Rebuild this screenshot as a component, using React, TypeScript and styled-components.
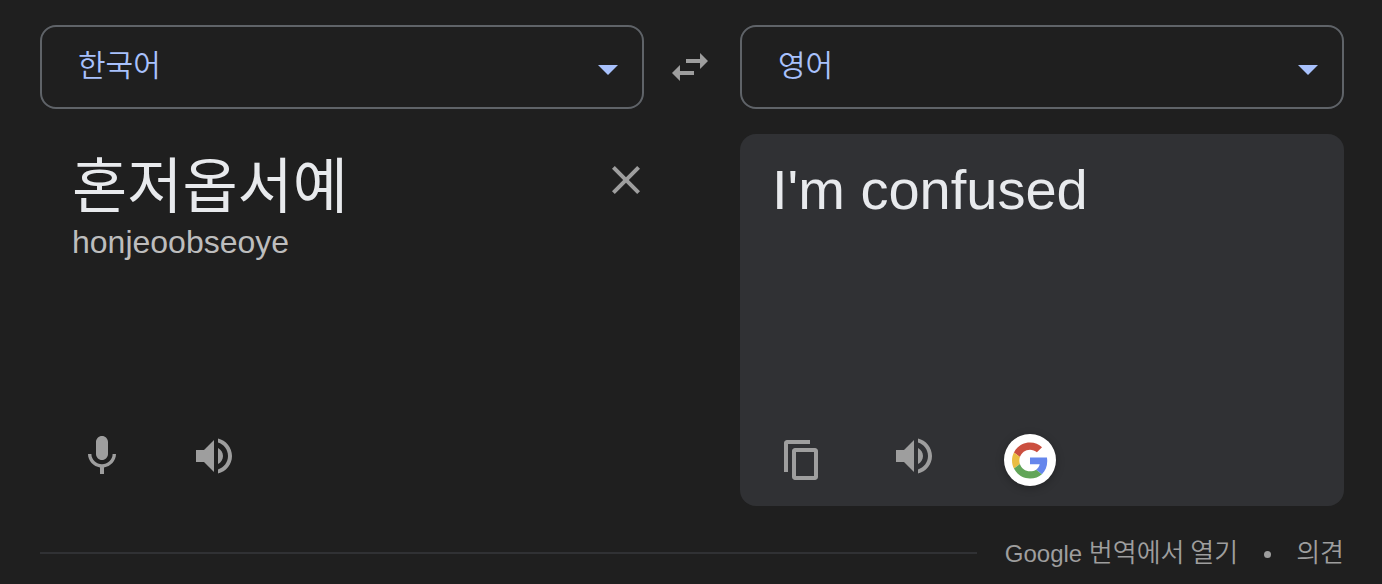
import React, { useState } from "react";
import styled, { createGlobalStyle } from "styled-components";

const GlobalStyle = createGlobalStyle`
  *, *::before, *::after { box-sizing: border-box; }
  body {
    margin: 0;
    background: #1f1f1f;
    color: #e8eaed;
    font-family: "Liberation Sans", "Noto Sans CJK KR", sans-serif;
  }
`;

const Page = styled.main`
  padding: 25px 38px 16px 40px;
`;

const LanguageBar = styled.div`
  display: grid;
  grid-template-columns: 1fr 96px 1fr;
  align-items: center;
`;

const SelectBox = styled.div`
  position: relative;
  height: 84px;
`;

const LanguageSelect = styled.select`
  appearance: none;
  width: 100%;
  height: 100%;
  padding: 0 64px 8px 36px;
  border: 2px solid #5f6368;
  border-radius: 16px;
  background: transparent;
  color: #a8c1fc;
  font-family: "Noto Sans CJK KR", sans-serif;
  font-size: 30px;
  font-weight: 350;
  line-height: 44px;
`;

const Caret = styled.svg`
  position: absolute;
  right: 26px;
  top: 40px;
  width: 20px;
  height: 10px;
  fill: #a8c1fc;
  pointer-events: none;
`;

const IconButton = styled.button`
  display: flex;
  align-items: center;
  justify-content: center;
  width: 48px;
  height: 48px;
  padding: 0;
  border: 0;
  background: none;
  color: #9e9e9e;
  cursor: pointer;
`;

const SwapButton = styled(IconButton)`
  justify-self: center;
  margin-right: 4px;
`;

const Panels = styled.div`
  display: grid;
  grid-template-columns: 1fr 1fr;
  column-gap: 96px;
  margin-top: 25px;
`;

const Panel = styled.section<{ $filled?: boolean }>`
  display: flex;
  flex-direction: column;
  min-width: 0;
  min-height: 372px;
  padding: 16px 0 16px 32px;
  border-radius: 16px;
  background: ${({ $filled }) => ($filled ? "#303134" : "transparent")};
`;

const SourceRow = styled.div`
  display: flex;
  align-items: flex-start;
  height: 72px;
`;

const SourceInput = styled.textarea`
  flex: 1;
  min-width: 0;
  height: 64px;
  padding: 0;
  border: 0;
  outline: 0;
  resize: none;
  overflow: hidden;
  background: transparent;
  color: #e8eaed;
  font-family: "Noto Sans CJK KR", sans-serif;
  font-size: 60px;
  line-height: 64px;
`;

const ClearButton = styled(IconButton)`
  margin: 6px -6px 0 0;
`;

const Romanized = styled.p`
  margin: 0;
  color: #bdbdbd;
  font-size: 32px;
  line-height: 40px;
`;

const Translation = styled.p`
  margin: 0;
  padding-top: 4px;
  font-size: 56px;
  line-height: 72px;
`;

const Actions = styled.div`
  display: flex;
  align-items: flex-start;
  gap: 64px;
  height: 76px;
  margin-top: auto;
  padding: 18px 0 0 6px;
`;

const GoogleButton = styled(IconButton)`
  width: 52px;
  height: 52px;
  margin: 2px 0 0 2px;
  border-radius: 50%;
  background: #fff;
  box-shadow: 0 2px 8px rgba(0, 0, 0, 0.28);
`;

const Footer = styled.footer`
  display: flex;
  align-items: center;
  margin-top: 28px;
  height: 38px;
`;

const Rule = styled.hr`
  flex: 1;
  height: 2px;
  margin: 0 28px 0 0;
  border: 0;
  background: #303134;
`;

const FooterLink = styled.a`
  padding-bottom: 2px;
  color: #9e9e9e;
  font-size: 24px;
  line-height: 36px;
  text-decoration: none;
`;

const Hangul = styled.span`
  font-family: "Noto Sans CJK KR", sans-serif;
  font-size: 26px;
  font-weight: 350;
`;

const Dot = styled.span`
  width: 7px;
  height: 7px;
  margin: 2px 25px 0 26px;
  border-radius: 50%;
  background: #9e9e9e;
`;

function Icon({ d }: { d: string }) {
  return (
    <svg width="48" height="48" viewBox="0 0 24 24" fill="currentColor" aria-hidden="true">
      <path d={d} />
    </svg>
  );
}

const paths = {
  swap: "M6.99 11 3 15l3.99 4v-3H14v-2H6.99v-3zM21 9l-3.99-4v3H10v2h7.01v3L21 9z",
  close:
    "M19 6.41 17.59 5 12 10.59 6.41 5 5 6.41 10.59 12 5 17.59 6.41 19 12 13.41 17.59 19 19 17.59 13.41 12z",
  mic: "M12 14c1.66 0 3-1.34 3-3V5c0-1.66-1.34-3-3-3S9 3.34 9 5v6c0 1.66 1.34 3 3 3zm5.3-3c0 3-2.54 5.1-5.3 5.1S6.7 14 6.7 11H5c0 3.41 2.72 6.23 6 6.72V21h2v-3.28c3.28-.48 6-3.3 6-6.72h-1.7z",
  speaker:
    "M3 9v6h4l5 5V4L7 9H3zm13.5 3c0-1.77-1.02-3.29-2.5-4.03v8.05c1.48-.73 2.5-2.25 2.5-4.02zM14 3.23v2.06c2.89.86 5 3.54 5 6.71s-2.11 5.85-5 6.71v2.06c4.01-.91 7-4.49 7-8.77s-2.99-7.86-7-8.77z",
  copy: "M16 4H4.5C3.67 4 3 4.67 3 5.5V20h2V6h11V4zm2.5 4h-10C7.67 8 7 8.67 7 9.5v13c0 .83.67 1.5 1.5 1.5h10c.83 0 1.5-.67 1.5-1.5v-13c0-.83-.67-1.5-1.5-1.5zM18 22H9V10h9v12z",
};

function GoogleMark() {
  return (
    <svg width="36" height="37" viewBox="0 0 48 48" aria-hidden="true">
      <path fill="#cb4f3f" d="M24 9.5c3.54 0 6.71 1.22 9.21 3.6l6.85-6.85C35.9 2.38 30.47 0 24 0 14.62 0 6.51 5.38 2.56 13.22l7.98 6.19C12.43 13.72 17.74 9.5 24 9.5z" />
      <path fill="#6586ec" d="M46.98 24.55c0-1.57-.15-3.09-.38-4.55H24v9.02h12.94c-.58 2.96-2.26 5.48-4.78 7.18l7.73 6c4.51-4.18 7.09-10.36 7.09-17.65z" />
      <path fill="#ebbd42" d="M10.53 28.59c-.48-1.45-.76-2.99-.76-4.59s.27-3.14.76-4.59l-7.98-6.19C.92 16.46 0 20.12 0 24s.92 7.54 2.56 10.78l7.97-6.19z" />
      <path fill="#62a558" d="M24 48c6.48 0 11.93-2.13 15.89-5.81l-7.73-6c-2.15 1.45-4.92 2.3-8.16 2.3-6.26 0-11.57-4.22-13.47-9.91l-7.98 6.19C6.51 42.62 14.62 48 24 48z" />
    </svg>
  );
}

function LanguagePicker({ label, value, options }: { label: string; value: string; options: string[] }) {
  return (
    <SelectBox>
      <LanguageSelect aria-label={label} defaultValue={value}>
        {options.map((o) => (
          <option key={o}>{o}</option>
        ))}
      </LanguageSelect>
      <Caret viewBox="0 0 20 10" aria-hidden="true">
        <path d="M0 0h20L10 10z" />
      </Caret>
    </SelectBox>
  );
}

export default function App() {
  const [text, setText] = useState("혼저옵서예");
  return (
    <>
      <GlobalStyle />
      <Page>
        <LanguageBar>
          <LanguagePicker label="출발어" value="한국어" options={["한국어", "영어"]} />
          <SwapButton type="button" aria-label="언어 바꾸기">
            <Icon d={paths.swap} />
          </SwapButton>
          <LanguagePicker label="도착어" value="영어" options={["한국어", "영어"]} />
        </LanguageBar>
        <Panels>
          <Panel>
            <SourceRow>
              <SourceInput
                aria-label="번역할 텍스트"
                rows={1}
                spellCheck={false}
                value={text}
                onChange={(e) => setText(e.target.value)}
              />
              <ClearButton type="button" aria-label="지우기" onClick={() => setText("")}>
                <Icon d={paths.close} />
              </ClearButton>
            </SourceRow>
            <Romanized>honjeoobseoye</Romanized>
            <Actions>
              <IconButton type="button" aria-label="음성 입력">
                <Icon d={paths.mic} />
              </IconButton>
              <IconButton type="button" aria-label="원문 듣기">
                <Icon d={paths.speaker} />
              </IconButton>
            </Actions>
          </Panel>
          <Panel $filled>
            <Translation lang="en">I'm confused</Translation>
            <Actions>
              <IconButton type="button" aria-label="복사">
                <Icon d={paths.copy} />
              </IconButton>
              <IconButton type="button" aria-label="번역 듣기">
                <Icon d={paths.speaker} />
              </IconButton>
              <GoogleButton type="button" aria-label="Google 검색">
                <GoogleMark />
              </GoogleButton>
            </Actions>
          </Panel>
        </Panels>
        <Footer>
          <Rule />
          <FooterLink href="#translate">
            Google <Hangul>번역에서 열기</Hangul>
          </FooterLink>
          <Dot />
          <FooterLink href="#feedback">
            <Hangul>의견</Hangul>
          </FooterLink>
        </Footer>
      </Page>
    </>
  );
}
